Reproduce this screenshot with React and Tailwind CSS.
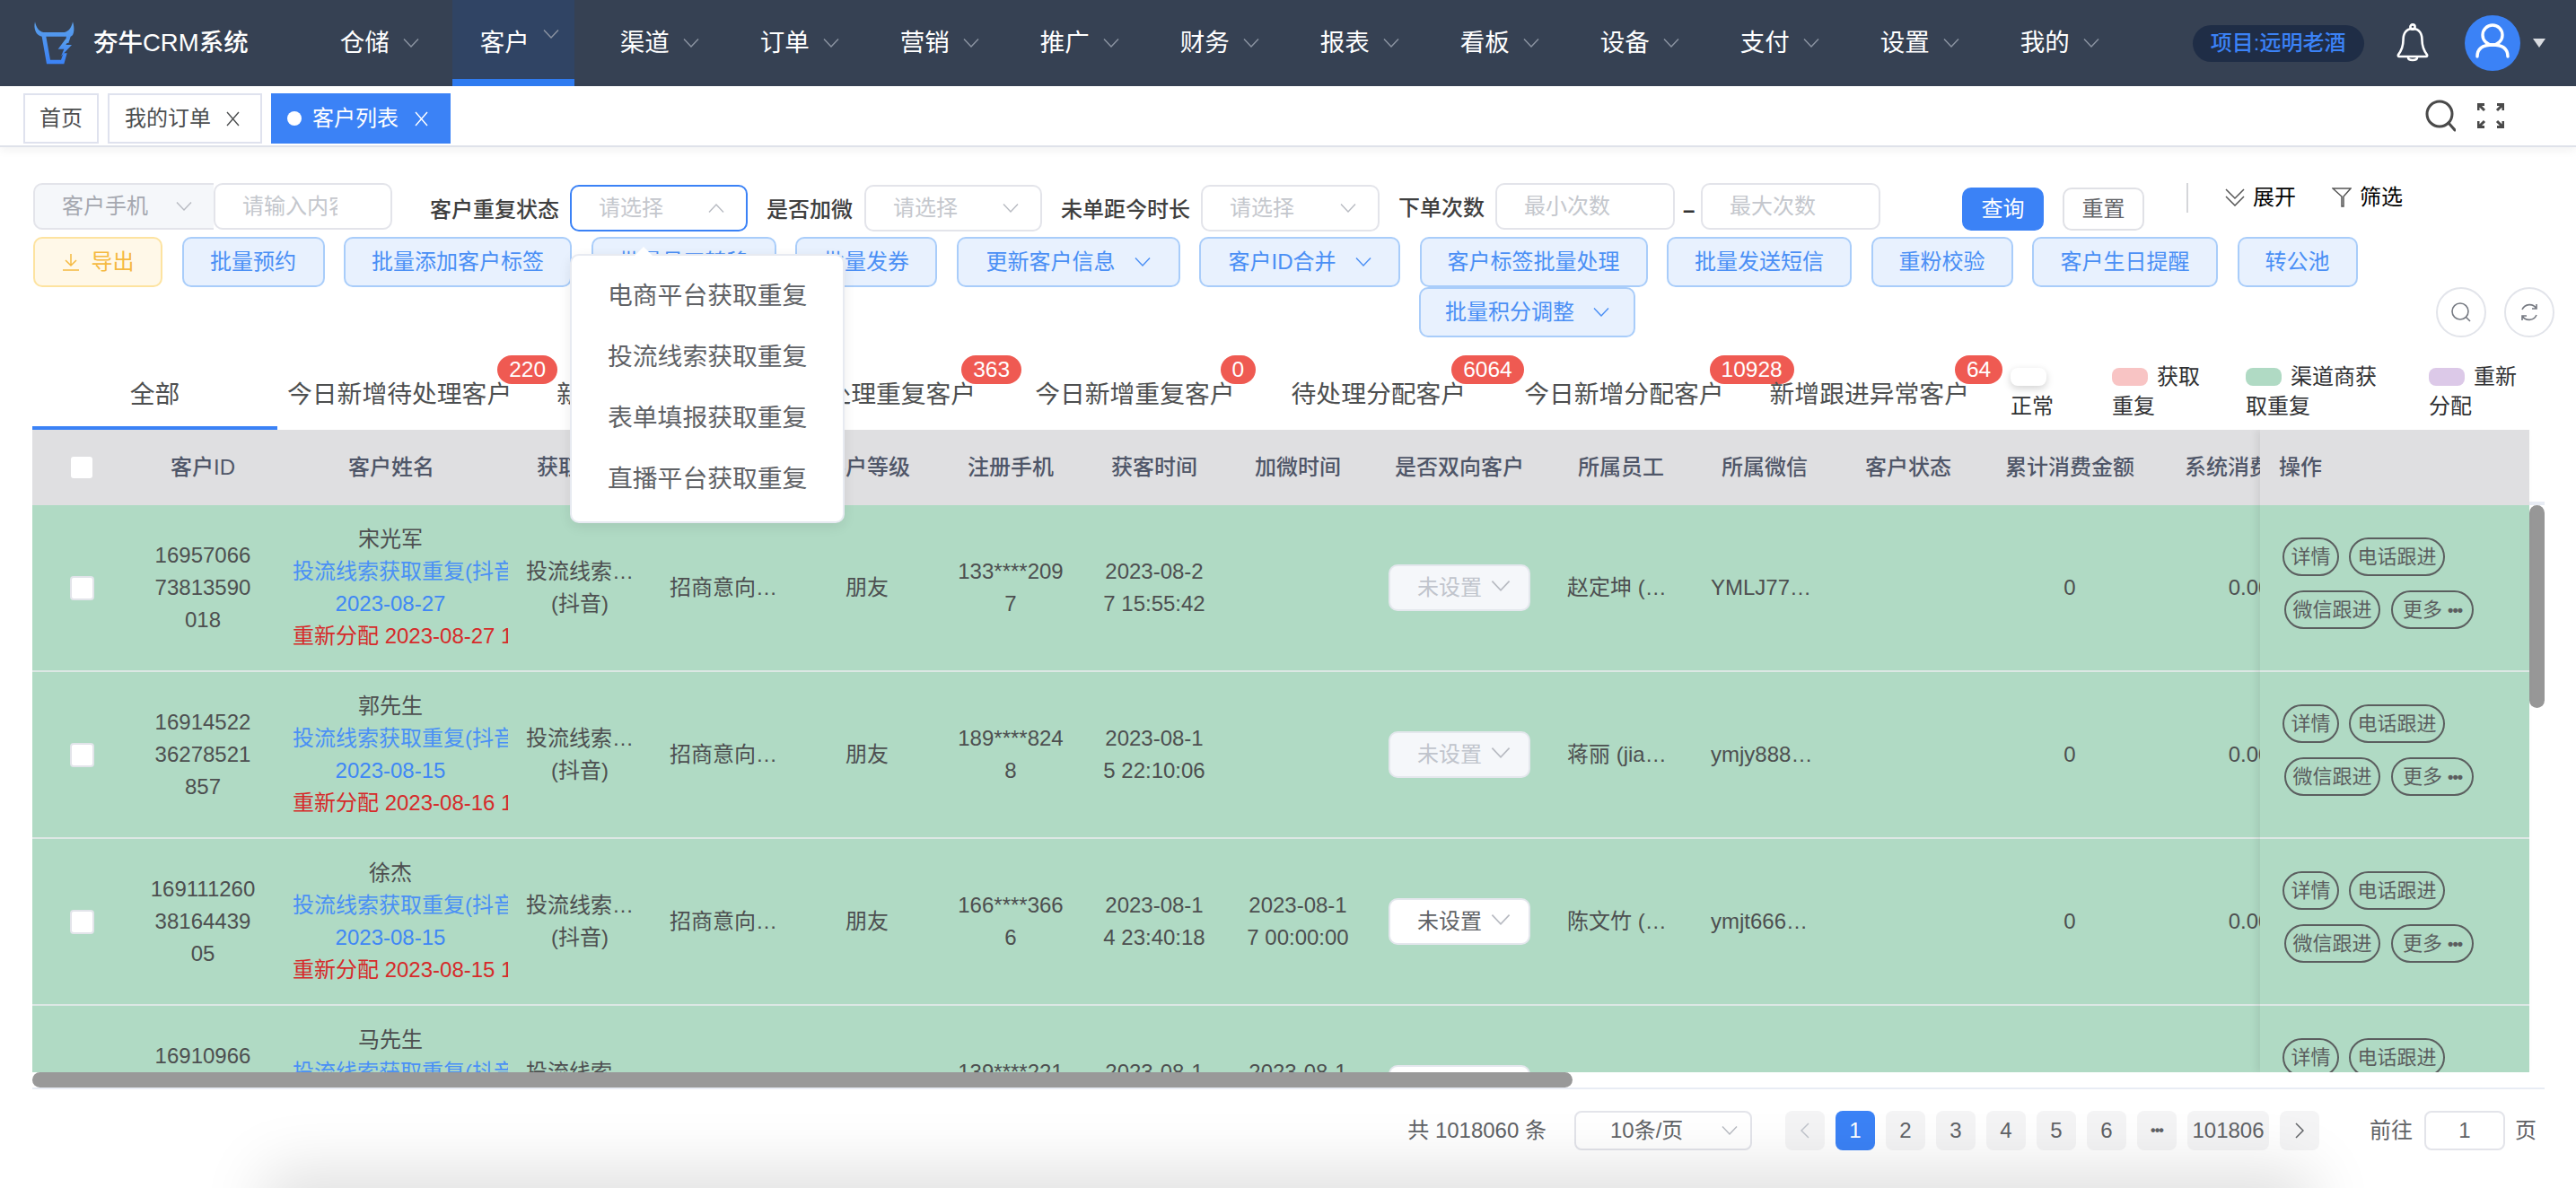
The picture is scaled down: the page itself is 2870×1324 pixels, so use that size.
const navItems = ['仓储', '客户', '渠道', '订单', '营销', '推广', '财务', '报表', '看板', '设备', '支付', '设置', '我的'];

const colWidths = [
  'w-[110px]', 'w-[160px]', 'w-[260px]', 'w-[160px]', 'w-[160px]', 'w-[160px]', 'w-[160px]', 'w-[160px]',
  'w-[160px]', 'w-[200px]', 'w-[160px]', 'w-[160px]', 'w-[160px]', 'w-[200px]', 'w-[200px]',
];

const headers = ['', '客户ID', '客户姓名', '获取来源', '客户意向', '客户等级', '注册手机', '获客时间', '加微时间', '是否双向客户', '所属员工', '所属微信', '客户状态', '累计消费金额', '系统消费金额'];

const batchButtons = [
  { label: '批量预约', w: 'w-[159px]' },
  { label: '批量添加客户标签', w: 'w-[254px]' },
  { label: '批量员工转移', w: 'w-[206px]' },
  { label: '批量发券', w: 'w-[158px]' },
  { label: '更新客户信息', w: 'w-[249px]', chevron: true },
  { label: '客户ID合并', w: 'w-[224px]', chevron: true },
  { label: '客户标签批量处理', w: 'w-[254px]' },
  { label: '批量发送短信', w: 'w-[206px]' },
  { label: '重粉校验', w: 'w-[158px]' },
  { label: '客户生日提醒', w: 'w-[207px]' },
  { label: '转公池', w: 'w-[134px]' },
];

const tabs = [
  { label: '今日新增待处理客户', badge: '220', ml: 'ml-[11px]' },
  { label: '新增待处理客户', ml: 'ml-[50px]' },
  { label: '总待处理重复客户', badge: '363', ml: 'ml-[50px]' },
  { label: '今日新增重复客户', badge: '0', ml: 'ml-[66px]' },
  { label: '待处理分配客户', badge: '6064', ml: 'ml-[63px]' },
  { label: '今日新增分配客户', badge: '10928', ml: 'ml-[65px]' },
  { label: '新增跟进异常客户', badge: '64', ml: 'ml-[51px]' },
];

const rows = [
  {
    id: ['16957066', '73813590', '018'], name: '宋光军', date: '2023-08-27', again: '2023-08-27 15:55:42',
    phone: ['133****209', '7'], got: ['2023-08-2', '7 15:55:42'], wx: null, disabled: true, staff: '赵定坤 (zhaodingkun)', wechat: 'YMLJ778899',
  },
  {
    id: ['16914522', '36278521', '857'], name: '郭先生', date: '2023-08-15', again: '2023-08-16 10:06:32',
    phone: ['189****824', '8'], got: ['2023-08-1', '5 22:10:06'], wx: null, disabled: true, staff: '蒋丽 (jiangli)', wechat: 'ymjy888666',
  },
  {
    id: ['169111260', '38164439', '05'], name: '徐杰', date: '2023-08-15', again: '2023-08-15 10:21:08',
    phone: ['166****366', '6'], got: ['2023-08-1', '4 23:40:18'], wx: ['2023-08-1', '7 00:00:00'], disabled: false, staff: '陈文竹 (chenwenzhu)', wechat: 'ymjt666888',
  },
  {
    id: ['16910966', '60421877', '233'], name: '马先生', date: '2023-08-04', again: '2023-08-04 09:12:40',
    phone: ['139****221', '5'], got: ['2023-08-1', '0 18:42:11'], wx: ['2023-08-1', '1 00:00:00'], disabled: false, staff: '陈文竹 (chenwenzhu)', wechat: 'ymjt666888',
  },
];

function Chevron({ up = false, large = false, className = '' }) {
  return (
    <svg viewBox="0 0 18 10" fill="none" stroke="currentColor" strokeWidth="1.4" className={`shrink-0 ${large ? 'h-[12px] w-[22px]' : 'h-[10px] w-[18px]'} ${className}`}>
      <polyline points={up ? '1,9.5 9,1 17,9.5' : '1,0.5 9,9 17,0.5'} />
    </svg>
  );
}

function Cross() {
  return (
    <svg viewBox="0 0 15 17" fill="none" stroke="currentColor" strokeWidth="1.4" className="h-[17px] w-[15px] shrink-0">
      <path d="M1 1L14 16M14 1L1 16" />
    </svg>
  );
}

function Logo() {
  return (
    <svg viewBox="0 0 210 195" className="h-[65px] w-[70px] shrink-0">
      <defs>
        <linearGradient id="bull" x1="0" y1="0" x2="0" y2="1">
          <stop offset="0" stopColor="#5ba0ea" />
          <stop offset="1" stopColor="#3b82f6" />
        </linearGradient>
      </defs>
      <path
        fill="url(#bull)"
        d="M27 25C21 48 31 72 50 74L66 166H124L134 130L122 130L114 152H78L64 74H132L126 96L139 96L146 74C159 72 160 44 153 25C150 42 140 58 125 60H55C40 58 30 42 27 25Z"
      />
      <path fill="url(#bull)" d="M128 84L104 116H124L114 140L150 102H130L142 84Z" />
    </svg>
  );
}

function Field({ placeholder, w = 'w-[198px]', focused = false, className = '' }) {
  return (
    <div
      className={`flex h-[52px] ${w} shrink-0 items-center justify-between rounded-[10px] border-2 bg-white pl-[30px] pr-[24px] text-[#c4c7cd] ${focused ? 'border-[#3b82f6]' : 'border-[#e3e4ea]'} ${className}`}
    >
      <span>{placeholder}</span>
      <Chevron up={focused} className="text-[#b8bbc2]" />
    </div>
  );
}

function RangeInput({ placeholder }) {
  return (
    <div className="flex h-[52px] w-[200px] shrink-0 items-center rounded-[10px] border-2 border-[#e3e4ea] bg-white pl-[30px] text-[#c4c7cd]">
      {placeholder}
    </div>
  );
}

function BatchButton({ label, w, chevron, className = '' }) {
  return (
    <button
      className={`flex h-[56px] ${w} shrink-0 items-center justify-center gap-[21px] rounded-[10px] border-2 border-[#a9cdfa] bg-[#e8f1fe] text-[24px] text-[#4a8ff5] ${className}`}
    >
      {label}
      {chevron && <Chevron />}
    </button>
  );
}

function CircleButton({ children }) {
  return (
    <button className="flex h-[56px] w-[56px] items-center justify-center rounded-full border-2 border-[#e2e4ea] text-[#767a82]">
      {children}
    </button>
  );
}

function Legend({ color, first, second, w, shadow = false }) {
  return (
    <div className={`${w} shrink-0 text-[24px] leading-[33px] text-[#303133]`}>
      <div className="flex h-[33px] items-center gap-[10px]">
        <span className={`h-[20px] w-[40px] shrink-0 rounded-[8px] ${color} ${shadow ? 'shadow-[0_3px_8px_rgba(0,0,0,0.18)]' : ''}`} />
        {first}
      </div>
      <div>{second}</div>
    </div>
  );
}

function Lines({ items }) {
  return (
    <div className="text-center leading-[36px]">
      {items.map((l) => (
        <div key={l}>{l}</div>
      ))}
    </div>
  );
}

function RowCell({ i, children }) {
  return <div className={`flex ${colWidths[i]} shrink-0 items-center justify-center overflow-hidden`}>{children}</div>;
}

function Truncated({ children }) {
  return <div className="w-[120px] truncate text-left">{children}</div>;
}

function Row({ row }) {
  return (
    <div className="flex h-[186px] border-b-2 border-[#dce7e4] bg-[#b0dac4] text-[24px] text-[#4d4f50]">
      <RowCell i={0}>
        <span className="h-[27px] w-[27px] rounded-[4px] border-2 border-[#e2e4ea] bg-white" />
      </RowCell>
      <RowCell i={1}>
        <Lines items={row.id} />
      </RowCell>
      <RowCell i={2}>
        <div className="ml-[20px] mr-[22px] w-[218px] shrink-0 text-center leading-[36px] whitespace-nowrap">
          <div>{row.name}</div>
          <div className="text-[#4a90f5]">投流线索获取重复(抖音)</div>
          <div className="text-[#3f87f5]">{row.date}</div>
          <div className="text-[#d62a2a]">重新分配 {row.again}</div>
        </div>
      </RowCell>
      <RowCell i={3}>
        <div className="w-[120px] text-center leading-[36px]">
          <div className="truncate text-left">投流线索获取重复</div>
          <div>(抖音)</div>
        </div>
      </RowCell>
      <RowCell i={4}>
        <Truncated>招商意向客户</Truncated>
      </RowCell>
      <RowCell i={5}>朋友</RowCell>
      <RowCell i={6}>
        <Lines items={row.phone} />
      </RowCell>
      <RowCell i={7}>
        <Lines items={row.got} />
      </RowCell>
      <RowCell i={8}>{row.wx && <Lines items={row.wx} />}</RowCell>
      <RowCell i={9}>
        <div
          className={`flex h-[52px] w-[158px] items-center gap-[10px] rounded-[10px] border-2 border-[#e4e7ed] pl-[30px] ${row.disabled ? 'bg-[#f5f7fa] text-[#c0c4cc]' : 'bg-white text-[#606266]'}`}
        >
          未设置
          <Chevron large className="mb-[4px] text-[#b8bbc2]" />
        </div>
      </RowCell>
      <RowCell i={10}>
        <Truncated>{row.staff}</Truncated>
      </RowCell>
      <RowCell i={11}>
        <Truncated>{row.wechat}</Truncated>
      </RowCell>
      <RowCell i={12} />
      <RowCell i={13}>0</RowCell>
      <RowCell i={14}>0.00</RowCell>
    </div>
  );
}

function Pill({ children, w }) {
  return (
    <span className={`flex h-[43px] ${w} items-center justify-center rounded-full border-2 border-[#5b5e5f] text-[22px] text-[#5b5e5f]`}>
      {children}
    </span>
  );
}

function Pager({ children, active = false, w = 'w-[44px]', muted = false }) {
  return (
    <span
      className={`flex h-[44px] ${w} items-center justify-center rounded-[8px] text-[24px] font-medium ${active ? 'bg-[#3b82f6] text-white' : 'bg-[#f4f4f5]'} ${!active && (muted ? 'text-[#c0c4cc]' : 'text-[#606266]')}`}
    >
      {children}
    </span>
  );
}

export default function App() {
  return (
    <div className="relative h-[1324px] w-[2870px] overflow-hidden bg-white text-[24px] text-[#4d4f50] [font-family:'Liberation_Sans','Noto_Sans_CJK_SC',sans-serif]">
      {/* Top bar */}
      <header className="flex h-[96px] items-center bg-[#364153] pl-[30px]">
        <Logo />
        <span className="ml-[4px] text-[27.5px] font-medium text-white">夯牛CRM系统</span>
        <nav className="ml-[71px] flex h-full gap-[20px]">
          {navItems.map((n) => {
            const active = n === '客户';
            return (
              <div
                key={n}
                className={`flex h-full w-[136px] items-center gap-[15px] pl-[31px] text-[27.5px] text-white ${active ? 'border-b-8 border-[#2f7bf0] bg-[#304464] pt-[8px]' : ''}`}
              >
                {n}
                <Chevron className={active ? 'mb-[20px] text-[#8d95a3]' : 'text-[#8d95a3]'} />
              </div>
            );
          })}
        </nav>
        <span className="ml-[87px] flex h-[41px] w-[191px] items-center justify-center rounded-full bg-[#1f2d46] text-[24px] font-medium text-[#3b82f6]">
          项目:远明老酒
        </span>
        <svg viewBox="0 0 36 44" fill="none" stroke="white" strokeWidth="2.6" className="ml-[36px] h-[44px] w-[36px]">
          <path d="M18 6C10 6 7.5 12 7.5 19C7.5 27 5 31 2 35C1.5 36 2 37 3 37H33C34 37 34.5 36 34 35C31 31 28.5 27 28.5 19C28.5 12 26 6 18 6Z" />
          <circle cx="18" cy="4" r="2.6" />
          <path d="M13 38C13 42 23 42 23 38" />
        </svg>
        <div className="ml-[40px] flex h-[62px] w-[62px] items-center justify-center rounded-full bg-[#3b82f6]">
          <svg viewBox="0 0 62 62" fill="none" stroke="white" strokeWidth="3.4" className="h-[62px] w-[62px]">
            <circle cx="31" cy="22" r="11" />
            <path d="M14 46C14 36 21 33 31 33C41 33 48 36 48 46" strokeLinecap="round" />
          </svg>
        </div>
        <span className="ml-[14px] h-0 w-0 border-x-[7.5px] border-t-[10px] border-x-transparent border-t-[#d9dbe0]" />
      </header>

      {/* Tag bar */}
      <div className="flex h-[68px] items-start border-b-2 border-[#dfe2ea] pl-[26px] pt-[8px] shadow-[0_4px_10px_rgba(0,0,0,0.05)]">
        <span className="flex h-[56px] w-[84px] items-center justify-center border-2 border-[#dfe2ee]">首页</span>
        <span className="ml-[10px] flex h-[56px] w-[172px] items-center gap-[17px] border-2 border-[#dfe2ee] pl-[17px]">
          我的订单
          <Cross />
        </span>
        <span className="ml-[10px] flex h-[56px] w-[200px] items-center bg-[#3b82f6] pl-[18px] text-white">
          <span className="h-[16px] w-[16px] rounded-full bg-white" />
          <span className="ml-[12px]">客户列表</span>
          <span className="ml-[18px]">
            <Cross />
          </span>
        </span>
        <svg viewBox="0 0 34 36" fill="none" stroke="#4a4a4a" strokeWidth="3" className="ml-[2200px] mt-[7px] h-[36px] w-[34px]">
          <circle cx="16" cy="16" r="14" />
          <path d="M26 26L33 34" strokeLinecap="round" />
        </svg>
        <svg viewBox="0 0 30 28" fill="none" stroke="#4a4a4a" strokeWidth="3" className="ml-[24px] mt-[11px] h-[28px] w-[30px]">
          <path d="M1 8V1.5H8M1.5 1.5L8 8M22 1.5H29V8M28.5 1.5L22 8M1 20V26.5H8M1.5 26.5L8 20M22 26.5H29V20M28.5 26.5L22 20" />
        </svg>
      </div>

      {/* Filters */}
      <section className="pl-[37px] pr-[24px] pt-[40px]">
        <div className="flex h-[60px] items-start text-[24px]">
          <div className="flex h-[52px] w-[201px] shrink-0 items-center justify-between rounded-l-[10px] border-2 border-r-0 border-[#e3e4ea] bg-[#f5f7fa] pl-[30px] pr-[24px] text-[#a5a8b0]">
            客户手机
            <Chevron className="text-[#b8bbc2]" />
          </div>
          <div className="flex h-[52px] w-[199px] shrink-0 items-center overflow-hidden rounded-[10px] border-2 border-[#e3e4ea] pl-[30px] text-[#c4c7cd]">
            <span className="w-[106px] shrink-0 overflow-hidden whitespace-nowrap">请输入内容</span>
          </div>
          <b className="ml-[42px] mt-[12px] font-medium text-[#3f3f3f]">客户重复状态</b>
          <Field placeholder="请选择" focused className="ml-[12px] mt-[2px]" />
          <b className="ml-[21px] mt-[12px] font-medium text-[#3f3f3f]">是否加微</b>
          <Field placeholder="请选择" className="ml-[13px] mt-[2px]" />
          <b className="ml-[21px] mt-[12px] font-medium text-[#3f3f3f]">未单距今时长</b>
          <Field placeholder="请选择" w="w-[199px]" className="ml-[12px] mt-[2px]" />
          <b className="ml-[21px] mt-[10px] font-medium text-[#3f3f3f]">下单次数</b>
          <div className="ml-[12px]">
            <RangeInput placeholder="最小次数" />
          </div>
          <span className="ml-[9px] mt-[12px] w-[16px] font-bold text-[#333]">–</span>
          <div className="ml-[4px]">
            <RangeInput placeholder="最大次数" />
          </div>
          <button className="ml-[91px] mt-[5px] h-[48px] w-[91px] rounded-[10px] bg-[#3b82f6] text-white">查询</button>
          <button className="ml-[21px] mt-[5px] h-[48px] w-[91px] rounded-[10px] border-2 border-[#e0e1e6] text-[#606266]">重置</button>
          <span className="ml-[47px] h-[33px] w-[2px] bg-[#d5d6da]" />
          <span className="ml-[41px] -mt-[2px] flex items-center gap-[9px] text-black">
            <svg viewBox="0 0 22 20" fill="none" stroke="#555" strokeWidth="1.5" className="h-[20px] w-[22px]">
              <path d="M1 1L11 11L21 1M1 9L11 19L21 9" />
            </svg>
            展开
          </span>
          <span className="ml-[40px] -mt-[2px] flex items-center gap-[9px] text-black">
            <svg viewBox="0 0 22 22" fill="none" stroke="#555" strokeWidth="1.5" className="h-[22px] w-[22px]">
              <path d="M1 1H21L13 10V21H11V10Z" />
            </svg>
            筛选
          </span>
        </div>

        <div className="flex gap-[21.5px]">
          <button className="flex h-[56px] w-[144px] shrink-0 items-center justify-center gap-[13px] rounded-[10px] border-2 border-[#fde3a0] bg-[#fff8e8] text-[#f5b940]">
            <svg viewBox="0 0 20 20" fill="none" stroke="currentColor" strokeWidth="1.5" className="h-[20px] w-[20px]">
              <path d="M10 1V13M4 8L10 14L16 8M1 19H19" />
            </svg>
            导出
          </button>
          {batchButtons.map((b) => (
            <BatchButton key={b.label} {...b} />
          ))}
        </div>

        <div className="flex h-[56px] items-start justify-between">
          <BatchButton label="批量积分调整" w="w-[241px]" chevron className="ml-[1544px]" />
          <div className="flex gap-[20px]">
            <CircleButton>
              <svg viewBox="0 0 24 24" fill="none" stroke="currentColor" strokeWidth="1.6" className="h-[24px] w-[24px]">
                <circle cx="11" cy="11" r="9" />
                <path d="M17.5 17.5L22 22" />
              </svg>
            </CircleButton>
            <CircleButton>
              <svg viewBox="0 0 24 24" fill="none" stroke="currentColor" strokeWidth="1.6" className="h-[24px] w-[24px]">
                <path d="M4 9A9 9 0 0 1 20 8M20 15A9 9 0 0 1 4 16M20 3V8H15M4 21V16H9" />
              </svg>
            </CircleButton>
          </div>
        </div>
      </section>

      {/* Tabs and legend */}
      <div className="ml-[36px] flex h-[103px] whitespace-nowrap text-[27.8px]">
        <div className="h-[103px] w-[273px] shrink-0 border-b-4 border-[#3b82f6] pt-[44px] text-center leading-[40px]">全部</div>
        {tabs.map((t) => (
          <div key={t.label} className={`relative mt-[44px] h-[40px] shrink-0 leading-[40px] ${t.ml}`}>
            {t.label}
            {t.badge && (
              <span className="absolute left-[calc(100%-16px)] top-[-24px] flex h-[32px] min-w-[38px] items-center justify-center rounded-[16px] bg-[#ef5a52] px-[13px] text-[24.5px] leading-none text-white">
                {t.badge}
              </span>
            )}
          </div>
        ))}
        <div className="ml-[46px] flex pt-[27px]">
          <Legend color="bg-white" first="" second="正常" w="w-[113px]" shadow />
          <Legend color="bg-[#f8c4c4]" first="获取" second="重复" w="w-[149px]" />
          <Legend color="bg-[#b0dac4]" first="渠道商获" second="取重复" w="w-[204px]" />
          <Legend color="bg-[#dcc9e8]" first="重新" second="分配" w="w-[100px]" />
        </div>
      </div>

      {/* Table */}
      <div className="ml-[36px] w-[2799px] border-b-2 border-[#e8ecf4]">
        <div className="flex h-[716px] overflow-hidden">
          <div className="w-[2482px] shrink-0 overflow-hidden">
            <div className="w-[2570px]">
              <div className="flex h-[84px] bg-[#dfdfe1] text-[24px] font-medium text-[#4f5668]">
                {headers.map((h, i) => (
                  <div key={i} className={`flex ${colWidths[i]} shrink-0 items-center justify-center whitespace-nowrap`}>
                    {i === 0 ? <span className="h-[24px] w-[24px] rounded-[3px] bg-white" /> : h}
                  </div>
                ))}
              </div>
              {rows.map((r) => (
                <Row key={r.name} row={r} />
              ))}
            </div>
          </div>
          <div className="z-10 w-[300px] shrink-0 shadow-[-4px_0_8px_rgba(0,0,0,0.07)]">
            <div className="flex h-[84px] items-center bg-[#dfdfe1] pl-[21px] font-medium text-[#4f5668]">操作</div>
            {rows.map((r) => (
              <div key={r.name} className="flex h-[186px] flex-col gap-[16px] border-b-2 border-[#dce7e4] bg-[#b0dac4] pl-[25px] pt-[36px]">
                <div className="flex gap-[11px]">
                  <Pill w="w-[63px]">详情</Pill>
                  <Pill w="w-[107px]">电话跟进</Pill>
                </div>
                <div className="ml-[2px] flex gap-[12px]">
                  <Pill w="w-[107px]">微信跟进</Pill>
                  <Pill w="w-[92px]">更多&nbsp;<b className="text-[18px] leading-none tracking-[-1px]">•••</b></Pill>
                </div>
              </div>
            ))}
          </div>
          <div className="w-[17px] shrink-0 pt-[80px]">
            <div className="h-[4px] w-[17px] bg-[#e8ecf4]" />
            <div className="h-[226px] w-[17px] rounded-full bg-[#979797]" />
          </div>
        </div>
        <div className="h-[17px]">
          <div className="h-[17px] w-[1716px] rounded-full bg-[#999999]" />
        </div>
      </div>

      {/* Pagination */}
      <footer className="mt-[24px] flex items-center justify-end pr-[44px] text-[24px] text-[#606266]">
        <span>共 1018060 条</span>
        <div className="ml-[31px] flex h-[44px] w-[198px] items-center justify-between rounded-[8px] border-2 border-[#e3e4ea] pl-[38px] pr-[14px]">
          10条/页
          <Chevron className="text-[#b8bbc2]" />
        </div>
        <div className="ml-[37px] flex gap-[12px]">
          <Pager muted>
            <svg viewBox="0 0 10 18" fill="none" stroke="currentColor" strokeWidth="1.5" className="h-[18px] w-[10px]">
              <path d="M9 1L1 9L9 17" />
            </svg>
          </Pager>
          <Pager active>1</Pager>
          <Pager>2</Pager>
          <Pager>3</Pager>
          <Pager>4</Pager>
          <Pager>5</Pager>
          <Pager>6</Pager>
          <Pager><b className="text-[16px] tracking-[-1px]">•••</b></Pager>
          <Pager w="w-[91px]">101806</Pager>
          <Pager>
            <svg viewBox="0 0 10 18" fill="none" stroke="currentColor" strokeWidth="1.5" className="h-[18px] w-[10px]">
              <path d="M1 1L9 9L1 17" />
            </svg>
          </Pager>
        </div>
        <span className="ml-[56px]">前往</span>
        <span className="ml-[13px] flex h-[44px] w-[90px] items-center justify-center rounded-[8px] border-2 border-[#e3e4ea]">1</span>
        <span className="ml-[11px]">页</span>
      </footer>

      {/* Dropdown for 客户重复状态 */}
      <div className="absolute left-[635px] top-[283px] z-20 h-[300px] w-[306px] rounded-[10px] border-2 border-[#e7eaf1] bg-white pt-[11px] text-[27.8px] text-[#606266] shadow-[0_4px_14px_rgba(0,0,0,0.08)]">
        <span className="absolute left-[70px] top-[-10px] h-0 w-0 border-x-[10px] border-b-[10px] border-x-transparent border-b-white" />
        {['电商平台获取重复', '投流线索获取重复', '表单填报获取重复', '直播平台获取重复'].map((t) => (
          <div key={t} className="flex h-[68px] items-center pl-[40px]">{t}</div>
        ))}
      </div>

      {/* Shadow from what sits below the fold */}
      <div className="absolute left-[330px] top-[1340px] h-[20px] w-[2210px] shadow-[0_0_70px_35px_rgba(0,0,0,0.13)]" />
    </div>
  );
}
